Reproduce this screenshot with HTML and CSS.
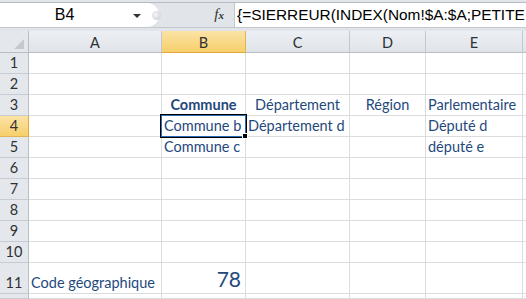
FILE: index.html
```html
<!DOCTYPE html>
<html lang="fr">
<head>
<meta charset="utf-8">
<title>Feuille</title>
<link rel="stylesheet" href="styles.css">
</head>
<body>
<div class="fbar">
  <div class="namebox"><span class="ref">B4</span><span class="arrow"></span></div>
  <div class="mid"><span class="grip"></span><span class="fx">f<span class="x">x</span></span></div>
  <div class="formula">{=SIERREUR(INDEX(Nom!$A:$A;PETITE</div>
</div>
<div class="band"></div>
<div class="sheet">
  <div class="corner"><span class="tri"></span></div>
  <div class="ch">A</div><div class="ch on">B</div><div class="ch">C</div><div class="ch">D</div><div class="ch">E</div><div class="ch last"></div>

  <div class="rh">1</div><div class="c"></div><div class="c"></div><div class="c"></div><div class="c"></div><div class="c"></div><div class="c"></div>
  <div class="rh">2</div><div class="c"></div><div class="c"></div><div class="c"></div><div class="c"></div><div class="c"></div><div class="c"></div>
  <div class="rh">3</div><div class="c"></div><div class="c ctr b">Commune</div><div class="c ctr">Département</div><div class="c ctr">Région</div><div class="c">Parlementaire</div><div class="c"></div>
  <div class="rh on">4</div><div class="c"></div><div class="c sel">Commune b</div><div class="c">Département d</div><div class="c"></div><div class="c">Député d</div><div class="c"></div>
  <div class="rh">5</div><div class="c"></div><div class="c">Commune c</div><div class="c"></div><div class="c"></div><div class="c">député e</div><div class="c"></div>
  <div class="rh">6</div><div class="c"></div><div class="c"></div><div class="c"></div><div class="c"></div><div class="c"></div><div class="c"></div>
  <div class="rh">7</div><div class="c"></div><div class="c"></div><div class="c"></div><div class="c"></div><div class="c"></div><div class="c"></div>
  <div class="rh">8</div><div class="c"></div><div class="c"></div><div class="c"></div><div class="c"></div><div class="c"></div><div class="c"></div>
  <div class="rh">9</div><div class="c"></div><div class="c"></div><div class="c"></div><div class="c"></div><div class="c"></div><div class="c"></div>
  <div class="rh">10</div><div class="c"></div><div class="c"></div><div class="c"></div><div class="c"></div><div class="c"></div><div class="c"></div>
  <div class="rh">11</div><div class="c">Code géographique</div><div class="c rt big">78</div><div class="c"></div><div class="c"></div><div class="c"></div><div class="c"></div>
  <div class="rh"></div><div class="c"></div><div class="c"></div><div class="c"></div><div class="c"></div><div class="c"></div><div class="c"></div>
</div>
</body>
</html>
```

FILE: styles.css
```css
html, body {
  margin: 0;
  padding: 0;
  background: #fff;
  width: 526px;
  height: 299px;
  overflow: hidden;
}

.fbar {
  display: flex;
  height: 28px;
  box-sizing: border-box;
  border-top: 3px solid #e1e5ea;
  background: #e1e5ea;
  position: relative;
}
.fbar::before {
  content: "";
  position: absolute;
  left: 0;
  right: 0;
  top: -1px;
  height: 1px;
  background: #b6bcc4;
}

.namebox {
  width: 146px;
  background: #fff;
  border-bottom: 1px solid #c3c8cf;
  display: flex;
  align-items: center;
  box-sizing: border-box;
  font-family: "Liberation Sans", Arial, sans-serif;
  font-size: 16px;
  color: #000;
}
.ref {
  flex: 1;
  text-align: center;
  padding-left: 0;
  padding-right: 4px;
}
.arrow {
  width: 0;
  height: 0;
  border-left: 4px solid transparent;
  border-right: 4px solid transparent;
  border-top: 4px solid #333;
  margin-right: 5px;
  margin-top: 2px;
}

.mid {
  width: 88px;
  display: flex;
  align-items: center;
  justify-content: space-between;
  background: #e1e5ea;
  border-bottom: 1px solid #c3c8cf;
  box-sizing: border-box;
  position: relative;
}
.mid::before {
  content: "";
  position: absolute;
  left: 0;
  top: 0;
  width: 13px;
  height: 24px;
  border-radius: 0 12px 12px 0;
  background: #fff;
}
.grip {
  width: 9px;
  height: 9px;
  border-radius: 50%;
  background: radial-gradient(circle at 40% 40%, #f4f5f7, #c6cad0);
  margin-left: 6px;
  position: relative;
}
.fx {
  font-family: "Liberation Serif", "Times New Roman", serif;
  font-style: italic;
  font-size: 15px;
  color: #333;
  margin-right: 10px;
  margin-top: -2px;
}
.fx .x {
  font-size: 11px;
  font-weight: bold;
}

.formula {
  flex: 1;
  background: #fff;
  border-left: 1px solid #c3c8cf;
  border-bottom: 1px solid #c3c8cf;
  box-sizing: border-box;
  font-family: "Liberation Sans", Arial, sans-serif;
  font-size: 15.4px;
  line-height: 24px;
  padding-left: 2px;
  white-space: nowrap;
  overflow: hidden;
  color: #000;
}

.band {
  height: 3px;
  background: #e1e5ea;
}

.sheet {
  display: grid;
  grid-template-columns: 29px 133px 84px 104px 76px 97px 1fr;
  grid-template-rows: 22px repeat(10, 21px) 31px 1fr;
  height: 268px;
  font-family: Lato, "Liberation Sans", sans-serif;
  font-size: 14.5px;
}

.corner {
  background: #e4e8ed;
  border-right: 1px solid #b9bec5;
  border-bottom: 1px solid #b9bec5;
  position: relative;
}
.tri {
  position: absolute;
  right: 4px;
  bottom: 3px;
  width: 0;
  height: 0;
  border-left: 10px solid transparent;
  border-bottom: 10px solid #c4c9d0;
}

.ch {
  background: linear-gradient(#eceff3, #e0e4e9);
  border-right: 1px solid #c3c8cf;
  border-bottom: 1px solid #b9bec5;
  display: flex;
  align-items: center;
  justify-content: center;
  color: #2f3134;
  padding-top: 1px;
}
.ch.on {
  background: linear-gradient(#fbe3a6, #f7cf6b);
  border-right-color: #e0b454;
  border-bottom-color: #e0a93f;
}
.ch.last {
  border-right: none;
}

.rh {
  background: #e4e8ed;
  border-right: 1px solid #b9bec5;
  border-bottom: 1px solid #c8ccd2;
  display: flex;
  align-items: flex-end;
  justify-content: center;
  color: #2f3134;
  line-height: 18px;
  padding-bottom: 1px;
}
.rh.on {
  background: linear-gradient(#fbe3a6, #f7cf6b);
  border-right-color: #e0a93f;
  border-bottom-color: #e0b454;
}

.c {
  border-right: 1px solid #dadcdd;
  border-bottom: 1px solid #dadcdd;
  display: flex;
  align-items: flex-end;
  padding: 0 2px 1px 2px;
  line-height: 18px;
  color: #1f497d;
  white-space: nowrap;
  min-width: 0;
}
.c.ctr {
  justify-content: center;
}
.c.rt {
  justify-content: flex-end;
  padding-right: 4px;
}
.c.b {
  font-weight: bold;
}
.c.big {
  font-size: 21px;
  line-height: 26px;
  padding-bottom: 1px;
}
.c.sel {
  position: relative;
  overflow: visible;
}
.c.sel::before {
  content: "";
  position: absolute;
  left: -2px;
  top: -2px;
  width: 87px;
  height: 24px;
  box-sizing: border-box;
  border: 1px solid #000;
  box-shadow: inset 0 0 0 1px #2b6cb8;
}
.c.sel::after {
  content: "";
  position: absolute;
  right: -3px;
  bottom: -3px;
  width: 4px;
  height: 4px;
  background: #000;
  border: 1px solid #fff;
}
```
